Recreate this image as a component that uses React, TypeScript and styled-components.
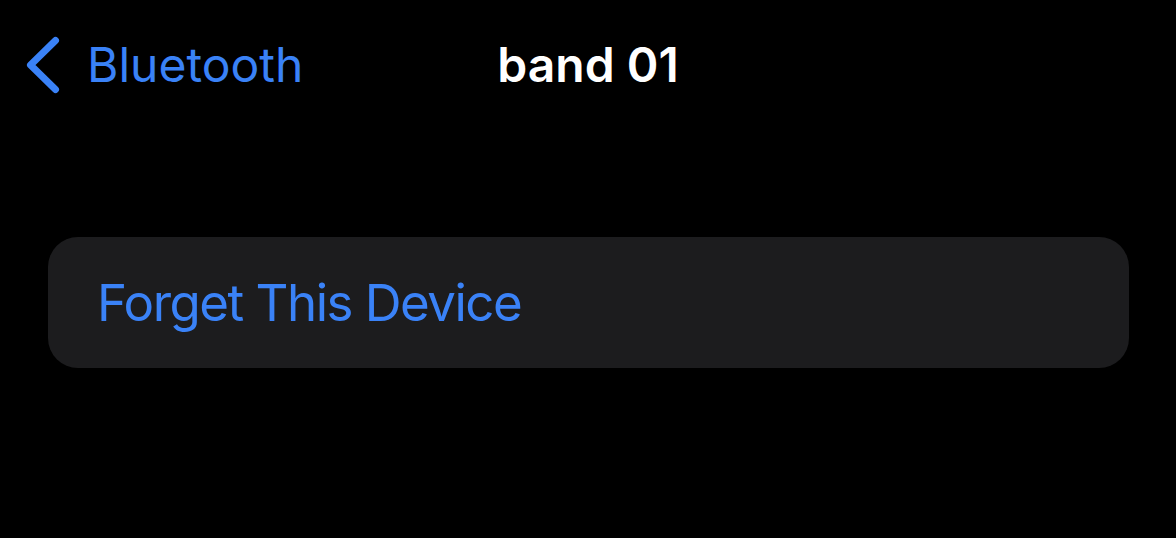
import styled, { createGlobalStyle } from "styled-components";

const GlobalStyle = createGlobalStyle`
    html, body {
        margin: 0;
        padding: 0;
        background: #000;
    }
    body {
        font-family: Inter, "Noto Sans", "Liberation Sans", sans-serif;
        -webkit-font-smoothing: antialiased;
    }
`

const Screen = styled.main`
    width: 1176px;
    height: 538px;
    background: #000;
    overflow: hidden;
`

const NavBar = styled.header`
    display: grid;
    grid-template-columns: 1fr auto 1fr;
    align-items: center;
    padding: 36px 24px 0 24px;
    height: 58px;
`

const BackButton = styled.button`
    display: flex;
    align-items: center;
    gap: 23px;
    justify-self: start;
    padding: 0;
    border: none;
    background: none;
    color: #3a82f7;
    font-family: inherit;
    font-size: 48px;
    line-height: 58px;
    cursor: pointer;
`

const Title = styled.h1`
    margin: 0;
    color: #fff;
    font-size: 48px;
    font-weight: 600;
    line-height: 58px;
`

const Group = styled.section`
    margin: 143px 47px 0 48px;
    height: 131px;
    border-radius: 30px;
    background: #1c1c1e;
    display: flex;
    align-items: center;
    padding: 0 49px;
`

const ActionRow = styled.button`
    padding: 0;
    border: none;
    background: none;
    color: #3a82f7;
    font-family: inherit;
    font-size: 51px;
    font-weight: 400;
    letter-spacing: -1.5px;
    cursor: pointer;
`

const Chevron = () => (
    <svg width="40" height="58" viewBox="0 0 40 58" fill="none">
        <polyline
            points="31.5,4.5 6.5,29 31.5,53.5"
            stroke="#3a82f7"
            strokeWidth="7"
            strokeLinecap="round"
            strokeLinejoin="round"
        />
    </svg>
)

export default function App() {
    return (
        <Screen>
            <GlobalStyle />
            <NavBar>
                <BackButton>
                    <Chevron />
                    Bluetooth
                </BackButton>
                <Title>band 01</Title>
                <div />
            </NavBar>
            <Group>
                <ActionRow>Forget This Device</ActionRow>
            </Group>
        </Screen>
    )
}
